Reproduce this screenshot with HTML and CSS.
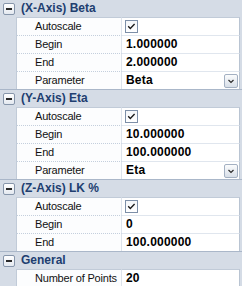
FILE: index.html
```html
<!DOCTYPE html>
<html>
<head>
<meta charset="utf-8">
<link rel="stylesheet" href="styles.css">
</head>
<body>
<div class="grid">
  <section class="cat">
    <div class="cat-head"><span class="toggle"><span class="minus"></span></span><span class="cat-title">(X-Axis) Beta</span></div>
    <div class="row first"><div class="gut"></div><div class="name">Autoscale</div><div class="val"><span class="check"><svg width="11" height="11" viewBox="0 0 11 11"><path d="M2.2 5.3 L4.3 7.4 L8.6 3.1" fill="none" stroke="#1a1a1a" stroke-width="1.4"/></svg></span></div><div class="pad"></div></div>
    <div class="row"><div class="gut"></div><div class="name">Begin</div><div class="val">1.000000</div><div class="pad"></div></div>
    <div class="row"><div class="gut"></div><div class="name">End</div><div class="val">2.000000</div><div class="pad"></div></div>
    <div class="row"><div class="gut"></div><div class="name">Parameter</div><div class="val drop"><span class="txt">Beta</span><span class="btn"><svg width="12" height="12" viewBox="0 0 12 12"><path d="M3.5 5 L6 7.5 L8.5 5" fill="none" stroke="#2b2b2b" stroke-width="1.2"/></svg></span></div><div class="pad"></div></div>
  </section>
  <section class="cat">
    <div class="cat-head"><span class="toggle"><span class="minus"></span></span><span class="cat-title">(Y-Axis) Eta</span></div>
    <div class="row first"><div class="gut"></div><div class="name">Autoscale</div><div class="val"><span class="check"><svg width="11" height="11" viewBox="0 0 11 11"><path d="M2.2 5.3 L4.3 7.4 L8.6 3.1" fill="none" stroke="#1a1a1a" stroke-width="1.4"/></svg></span></div><div class="pad"></div></div>
    <div class="row"><div class="gut"></div><div class="name">Begin</div><div class="val">10.000000</div><div class="pad"></div></div>
    <div class="row"><div class="gut"></div><div class="name">End</div><div class="val">100.000000</div><div class="pad"></div></div>
    <div class="row"><div class="gut"></div><div class="name">Parameter</div><div class="val drop"><span class="txt">Eta</span><span class="btn"><svg width="12" height="12" viewBox="0 0 12 12"><path d="M3.5 5 L6 7.5 L8.5 5" fill="none" stroke="#2b2b2b" stroke-width="1.2"/></svg></span></div><div class="pad"></div></div>
  </section>
  <section class="cat">
    <div class="cat-head"><span class="toggle"><span class="minus"></span></span><span class="cat-title">(Z-Axis) LK %</span></div>
    <div class="row first"><div class="gut"></div><div class="name">Autoscale</div><div class="val"><span class="check"><svg width="11" height="11" viewBox="0 0 11 11"><path d="M2.2 5.3 L4.3 7.4 L8.6 3.1" fill="none" stroke="#1a1a1a" stroke-width="1.4"/></svg></span></div><div class="pad"></div></div>
    <div class="row"><div class="gut"></div><div class="name">Begin</div><div class="val">0</div><div class="pad"></div></div>
    <div class="row"><div class="gut"></div><div class="name">End</div><div class="val">100.000000</div><div class="pad"></div></div>
  </section>
  <section class="cat">
    <div class="cat-head"><span class="toggle"><span class="minus"></span></span><span class="cat-title">General</span></div>
    <div class="row first"><div class="gut"></div><div class="name">Number of Points</div><div class="val">20</div><div class="pad"></div></div>
  </section>
</div>
</body>
</html>
```
FILE: styles.css
```css
html, body {
  margin: 0;
  padding: 0;
  overflow: hidden;
  background: #d5dce6;
}
.grid {
  margin-top: -1px;
  width: 242px;
  font-family: "Liberation Sans", Arial, sans-serif;
}
.cat-head {
  box-sizing: border-box;
  height: 18px;
  border-top: 1px solid #aab7c9;
  background: #d5dce6;
  display: flex;
  align-items: flex-start;
}
.toggle {
  box-sizing: border-box;
  width: 12px;
  height: 12px;
  margin: 3px 0 0 3px;
  border: 1px solid #8796ab;
  border-radius: 2px;
  background: linear-gradient(#ffffff, #e4e9f0);
  display: flex;
  align-items: center;
  justify-content: center;
}
.minus {
  width: 6px;
  height: 1.5px;
  background: #2a2a2a;
}
.cat-title {
  margin-left: 6px;
  font-size: 12px;
  line-height: 17px;
  font-weight: bold;
  color: #213e70;
}
.row {
  display: grid;
  grid-template-columns: 16px 106px 118px 2px;
  height: 18px;
}
.gut, .pad {
  background: #d5dce6;
}
.name {
  box-sizing: border-box;
  height: 18px;
  border-left: 1px solid #c1cbd8;
  border-right: 1px solid #dde3eb;
  border-top: 1px dotted #c4cfdd;
  background: #fcfdfe;
  padding-left: 18px;
  font-size: 11px;
  letter-spacing: -0.2px;
  line-height: 17px;
  color: #111;
  white-space: nowrap;
  overflow: hidden;
}
.val {
  box-sizing: border-box;
  height: 18px;
  border-top: 1px solid #e0e6ee;
  border-right: 1px solid #b9c4d2;
  background: #fff;
  padding-left: 4px;
  font-size: 12px;
  font-weight: bold;
  letter-spacing: 0.2px;
  line-height: 17px;
  color: #000;
  display: flex;
  align-items: center;
}
.row.first .name,
.row.first .val {
  border-top: 1px solid #c1cbd8;
}
.check {
  box-sizing: border-box;
  width: 13px;
  height: 13px;
  margin-left: -1px;
  border: 1px solid #7d8fa8;
  background: linear-gradient(#f4f6f9, #ffffff);
  display: flex;
  align-items: center;
  justify-content: center;
}
.drop {
  justify-content: space-between;
}
.btn {
  box-sizing: border-box;
  width: 14px;
  height: 14px;
  margin-right: 1px;
  border: 1px solid #a3b0c2;
  border-radius: 2px;
  background: linear-gradient(#fbfcfd, #d8dfe8);
  display: flex;
  align-items: center;
  justify-content: center;
}
```
